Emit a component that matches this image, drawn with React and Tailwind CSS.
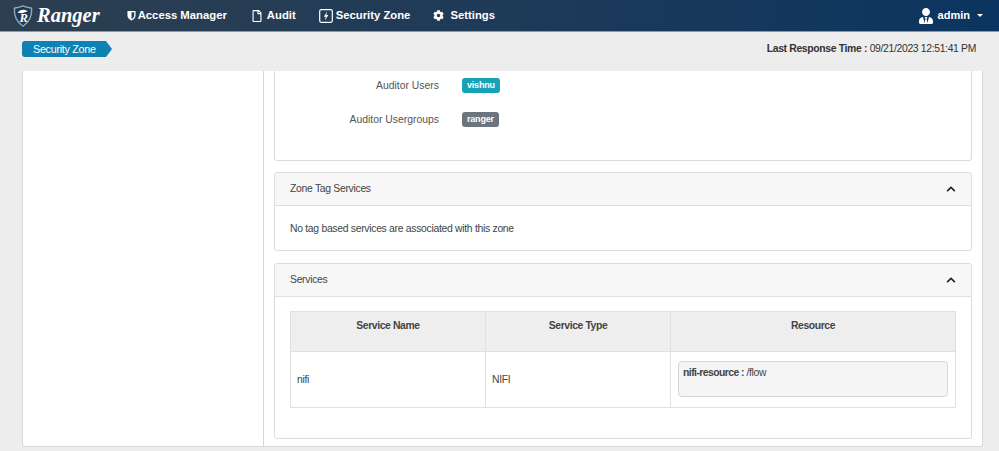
import React from 'react';
import { FaCog, FaRegFile, FaUserTie, FaChevronUp } from 'react-icons/fa';

const Logo = () => (
  <div className="flex items-center">
    <svg width="22" height="24" viewBox="0 0 28 30" className="mr-[3px]">
      <path d="M14 2 C18 4 22 4.500 25 5 C25.500 14 23 22 14 28 C5 22 2.500 14 3 5 C6 4.500 10 4 14 2 Z" fill="#1e3a52" stroke="#8fa9bd" strokeWidth="1.800" />
      <path d="M7 11 C10 6.500 16 6 20 9 L13 11.500 Z" fill="#ffffff" />
      <text x="15" y="23" textAnchor="middle" fontSize="16" fontWeight="700" fontStyle="italic" fontFamily="'Liberation Serif', serif" fill="#ffffff">R</text>
    </svg>
    <span className="font-['Liberation_Serif',serif] text-[20.500px] font-bold italic text-white">Ranger</span>
  </div>
);

const HalfShield = () => (
  <svg width="9" height="11" viewBox="0 0 10 12">
    <path d="M0.500 1 H9.500 V6 C9.500 9 7 10.800 5 11.500 C3 10.800 0.500 9 0.500 6 Z" fill="#ffffff" />
    <path d="M5 2.500 H8 V6 C8 8 6.500 9.200 5 9.800 Z" fill="#243f58" />
  </svg>
);

const ZoneIcon = () => (
  <svg width="14" height="14" viewBox="0 0 14 14" fill="none">
    <rect x="0.700" y="0.700" width="12.600" height="12.600" rx="1.500" stroke="#ffffff" strokeWidth="1.200" />
    <path d="M8 2.500 L4.800 7.800 H6.800 L6 11.500 L9.300 6 H7.300 Z" fill="#ffffff" />
  </svg>
);

const NavItem = ({ icon, label, className }) => (
  <div className={`flex items-center text-[11.300px] font-bold text-white ${className}`}>
    {icon}
    <span>{label}</span>
  </div>
);

const Panel = ({ title, children, className }) => (
  <div className={`rounded-[3px] border border-[#dcdcdc] bg-white ${className}`}>
    <div className="flex h-[33px] items-center justify-between rounded-t-[3px] border-b border-[#dfdfdf] bg-[#f7f7f7] pl-[15px] pr-[15px] text-[10.400px] tracking-[-0.3px] text-[#444]">
      <span>{title}</span>
      <FaChevronUp className="text-[10px] text-[#222]" />
    </div>
    {children}
  </div>
);

const Row = ({ label, badge, color, className }) => (
  <div className={`flex h-[15px] items-center ${className}`}>
    <div className="w-[164px] pt-px text-right text-[10.400px] text-[#555]">{label}</div>
    <span className={`ml-[23px] flex h-[15px] items-center rounded-[3px] px-[5px] text-[9px] tracking-[-0.2px] font-bold text-white ${color}`}>{badge}</span>
  </div>
);

export default function App() {
  return (
    <div className="flex h-[451px] w-[999px] flex-col overflow-hidden bg-[#ededed] font-['Liberation_Sans',Arial,sans-serif]">
      <header className="flex h-[31px] shrink-0 items-center bg-gradient-to-r from-[#2d3f50] to-[#0a3560] pl-[12px] pr-[16px] shadow-[0_1px_0_#8d9aa6]">
        <Logo />
        <NavItem className="ml-[27px] gap-[2px]" icon={<HalfShield />} label="Access Manager" />
        <NavItem className="ml-[24px] gap-[4px]" icon={<FaRegFile className="text-[12px]" />} label="Audit" />
        <NavItem className="ml-[23px] gap-[3px]" icon={<ZoneIcon />} label="Security Zone" />
        <NavItem className="ml-[23px] gap-[6px]" icon={<FaCog className="text-[11px]" />} label="Settings" />
        <div className="ml-auto flex items-center gap-[4px] text-[11px] font-bold text-white">
          <FaUserTie className="text-[16px]" />
          <span>admin</span>
          <span className="ml-[3px] h-0 w-0 border-x-[3px] border-t-[3px] border-x-transparent border-t-white" />
        </div>
      </header>

      <div className="flex h-[40px] shrink-0 items-start justify-between pl-[22px] pr-[23px] pt-[10px]">
        <div className="relative flex h-[16px] w-[84px] items-center rounded-l-[3px] bg-[#0f82b4] pl-[11px] text-[10.800px] tracking-[-0.3px] text-white">
          Security Zone
          <span className="absolute left-full top-0 h-0 w-0 border-y-[8px] border-l-[6px] border-y-transparent border-l-[#0f82b4]" />
        </div>
        <div className="text-[10.400px] leading-[16px] tracking-[-0.34px] text-[#333]">
          <span className="font-bold">Last Response Time : </span>09/21/2023 12:51:41 PM
        </div>
      </div>

      <main className="ml-[22px] flex h-[376px] w-[961px] shrink-0 rounded-b-[3px] border-x border-b border-[#d8d8d8] bg-white">
        <aside className="w-[241px] shrink-0 border-r border-[#d8d8d8]" />
        <div className="min-w-0 flex-1 overflow-hidden pl-[10px] pr-[10px]">
          <div className="h-[90px] rounded-b-[3px] border-x border-b border-[#dcdcdc] pt-[7px]">
            <Row label="Auditor Users" badge="vishnu" color="bg-[#17a2b8]" />
            <Row label="Auditor Usergroups" badge="ranger" color="bg-[#6c757d]" className="mt-[19px]" />
          </div>
          <Panel title="Zone Tag Services" className="mt-[11px] h-[79px]">
            <p className="pl-[15px] pt-[15px] text-[10.400px] tracking-[-0.3px] text-[#444]">No tag based services are associated with this zone</p>
          </Panel>
          <Panel title="Services" className="mt-[12px] h-[176px]">
            <div className="px-[15px] pt-[14px]">
              <table className="w-full table-fixed border-collapse text-[10.400px] tracking-[-0.3px] text-[#444]">
                <colgroup>
                  <col className="w-[195px]" />
                  <col className="w-[185px]" />
                  <col />
                </colgroup>
                <thead>
                  <tr className="h-[40px] bg-[#eeeeee] font-bold tracking-[-0.4px]">
                    <th className="border border-[#e0e0e0] pb-[11px]">Service Name</th>
                    <th className="border border-[#e0e0e0] pb-[11px]">Service Type</th>
                    <th className="border border-[#e0e0e0] pb-[11px]">Resource</th>
                  </tr>
                </thead>
                <tbody>
                  <tr className="h-[56px]">
                    <td className="border border-[#e0e0e0] pl-[6px]">nifi</td>
                    <td className="border border-[#e0e0e0] pl-[6px]">NIFI</td>
                    <td className="border border-[#e0e0e0] px-[7px] pt-[9px] align-top">
                      <div className="h-[36px] rounded-[4px] border border-[#d6d6d6] bg-[#f5f5f5] pl-[4px] pt-[3px]">
                        <span className="font-bold tracking-[-0.55px]">nifi-resource : </span>/flow
                      </div>
                    </td>
                  </tr>
                </tbody>
              </table>
            </div>
          </Panel>
        </div>
      </main>

      <footer className="ml-[22px] mt-[2px] shrink-0 text-[10px] text-[#666]">Licensed under the Apache License, Version 2.0</footer>
    </div>
  );
}
